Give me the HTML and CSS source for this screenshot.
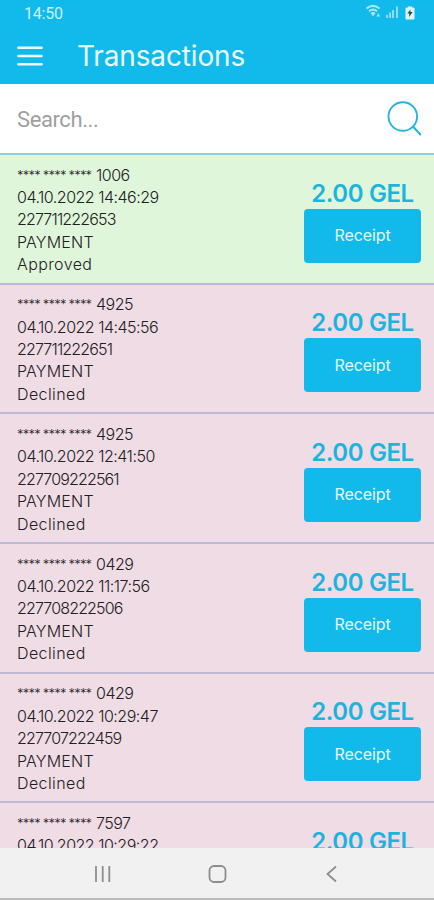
FILE: index.html
```html
<!DOCTYPE html>
<html lang="en">
<head>
<meta charset="utf-8">
<title>Transactions</title>
<link rel="stylesheet" href="styles.css">
</head>
<body>
<header class="top">
  <div class="status">
    <span class="clock">14:50</span>
    <svg class="signals" width="52" height="20" viewBox="0 0 52 20">
      <g fill="none" stroke="#a9e6f8" stroke-width="2"><path d="M1.500 7.500Q8 2.200 14.500 7.500"/><path d="M4 10.300Q8 7 12 10.300"/></g>
      <path d="M5.500 12Q8 10 10.500 12L8 15.500zM11.500 15.500l1.800-3.500 1.700 3.500z" fill="#a9e6f8"/>
      <path d="M21 14h2v3h-2zM24 11.500h2V17h-2zM27 9h2v8h-2zM31 5.500h2V17h-2z" fill="#8bdcf4"/>
      <path d="M41.500 6.500H43V5.500h4v1h1.500q1 0 1 1v10q0 1-1 1h-7q-1 0-1-1v-10q0-1 1-1z" fill="#dcf5fa"/>
      <path d="M45.500 8.500L42.300 12.500h2l-.3 3.500 3.700-5h-2.200z" fill="#264b58"/>
    </svg>
  </div>
  <div class="bar">
    <svg class="menu" width="26" height="22" viewBox="0 0 26 22"><path d="M1.500 2.700h23M1.500 11h23M1.500 19.200h23" stroke="#f2fcff" stroke-width="2.600" stroke-linecap="round"/></svg>
    <h1 class="title">Transactions</h1>
  </div>
</header>
<div class="search">
  <span class="hint">Search...</span>
  <svg width="36" height="36" viewBox="0 0 36 36" fill="none" stroke="#24b5df" stroke-width="1.900" stroke-linecap="round"><circle cx="16.800" cy="15.500" r="14.300"/><path d="M27 25.500l7.300 8"/></svg>
</div>
<main class="list">
  <article class="row approved">
    <div class="info"><p><span class="mask">**** **** ****</span><span class="pan">1006</span></p><p class="date">04.10.2022 14:46:29</p><p class="ref">227711222653</p><p class="type">PAYMENT</p><p class="state">Approved</p></div>
    <div class="side"><strong class="amount">2.00 GEL</strong><button class="receipt">Receipt</button></div>
  </article>
  <article class="row">
    <div class="info"><p><span class="mask">**** **** ****</span><span class="pan">4925</span></p><p class="date">04.10.2022 14:45:56</p><p class="ref">227711222651</p><p class="type">PAYMENT</p><p class="state">Declined</p></div>
    <div class="side"><strong class="amount">2.00 GEL</strong><button class="receipt">Receipt</button></div>
  </article>
  <article class="row">
    <div class="info"><p><span class="mask">**** **** ****</span><span class="pan">4925</span></p><p class="date">04.10.2022 12:41:50</p><p class="ref">227709222561</p><p class="type">PAYMENT</p><p class="state">Declined</p></div>
    <div class="side"><strong class="amount">2.00 GEL</strong><button class="receipt">Receipt</button></div>
  </article>
  <article class="row">
    <div class="info"><p><span class="mask">**** **** ****</span><span class="pan">0429</span></p><p class="date">04.10.2022 11:17:56</p><p class="ref">227708222506</p><p class="type">PAYMENT</p><p class="state">Declined</p></div>
    <div class="side"><strong class="amount">2.00 GEL</strong><button class="receipt">Receipt</button></div>
  </article>
  <article class="row">
    <div class="info"><p><span class="mask">**** **** ****</span><span class="pan">0429</span></p><p class="date">04.10.2022 10:29:47</p><p class="ref">227707222459</p><p class="type">PAYMENT</p><p class="state">Declined</p></div>
    <div class="side"><strong class="amount">2.00 GEL</strong><button class="receipt">Receipt</button></div>
  </article>
  <article class="row">
    <div class="info"><p><span class="mask">**** **** ****</span><span class="pan">7597</span></p><p class="date">04.10.2022 10:29:22</p></div>
    <div class="side"><strong class="amount">2.00 GEL</strong></div>
  </article>
</main>
<nav class="nav">
  <svg width="20" height="20" viewBox="0 0 20 20" fill="none" stroke="#8d8d8d" stroke-width="1.800"><path d="M3 2v16M9.700 2v16M16.300 2v16"/></svg>
  <svg width="20" height="20" viewBox="0 0 20 20" fill="none" stroke="#8d8d8d" stroke-width="1.800"><rect x="1.500" y="2" width="16" height="16" rx="4.500"/></svg>
  <svg width="20" height="20" viewBox="0 0 20 20" fill="none" stroke="#8d8d8d" stroke-width="1.800"><path d="M14 2.500L5.500 10l8.500 7.500"/></svg>
</nav>
</body>
</html>
```
FILE: styles.css
```css
* { box-sizing: border-box; }
body {
  margin: 0;
  width: 434px;
  height: 900px;
  overflow: hidden;
  display: flex;
  flex-direction: column;
  background: #fff;
  font-family: Inter, "Liberation Sans", sans-serif;
}
p, h1 { margin: 0; }
.top { height: 84px; flex: none; background: #12baeb; }
.status {
  height: 27px;
  padding: 0 17px 0 24px;
  display: flex;
  justify-content: space-between;
}
.clock { font: 16px/27px Roboto, sans-serif; color: #c9f1fc; letter-spacing: -.2px; }
.signals { margin-top: 1px; }
.bar { display: flex; align-items: center; height: 57px; padding: 0 17px; gap: 34px; }
.menu { flex: none; }
.title {
  font-size: 28px;
  line-height: 36px;
  font-weight: 400;
  letter-spacing: -.15px;
  color: #e8faff;
}
.search {
  flex: none;
  height: 71px;
  padding: 0 12px 0 17px;
  display: flex;
  align-items: center;
  justify-content: space-between;
  border-bottom: 2px solid #88d2df;
}
.hint { font: 22px/30px Roboto, sans-serif; color: #a0a0a0; letter-spacing: -.4px; padding-top: 2px; }
.list { flex: 1; min-height: 0; overflow: hidden; }
.row {
  height: 129.7px;
  padding: 8.6px 13px 0 17px;
  display: flex;
  justify-content: space-between;
  background: #f0dce5;
  border-bottom: 2px solid #bdbad5;
}
.approved { background: #e0f6da; }
.info {
  font-size: 16px;
  line-height: 22.4px;
  font-weight: 300;
  color: #202022;
  white-space: nowrap;
}
.info p { display: flex; height: 22.4px; }
.mask { width: 79px; font-size: 13px; letter-spacing: -.79px; }
.pan { letter-spacing: -.5px; }
.date { letter-spacing: -.5px; }
.ref { letter-spacing: -.85px; }
.type { letter-spacing: .2px; }
.state { letter-spacing: .4px; }
.side { width: 117px; display: flex; flex-direction: column; align-items: center; padding-top: 15px; }
.amount {
  font-size: 24px;
  line-height: 30px;
  font-weight: 600;
  color: #1bb4de;
  white-space: nowrap;
  letter-spacing: -.4px;
}
.receipt {
  width: 117px;
  height: 54px;
  padding: 0 0 1px;
  border: 0;
  border-radius: 4px;
  background: #12baeb;
  color: #e2f8ff;
  font: 400 16px Inter, sans-serif;
  letter-spacing: -.1px;
}
.nav {
  flex: none;
  height: 52px;
  padding: 2px 92px 0 93px;
  display: flex;
  justify-content: space-between;
  align-items: center;
  background: #f1f1f1;
  border-bottom: 2px solid #bcbcbc;
}
```
